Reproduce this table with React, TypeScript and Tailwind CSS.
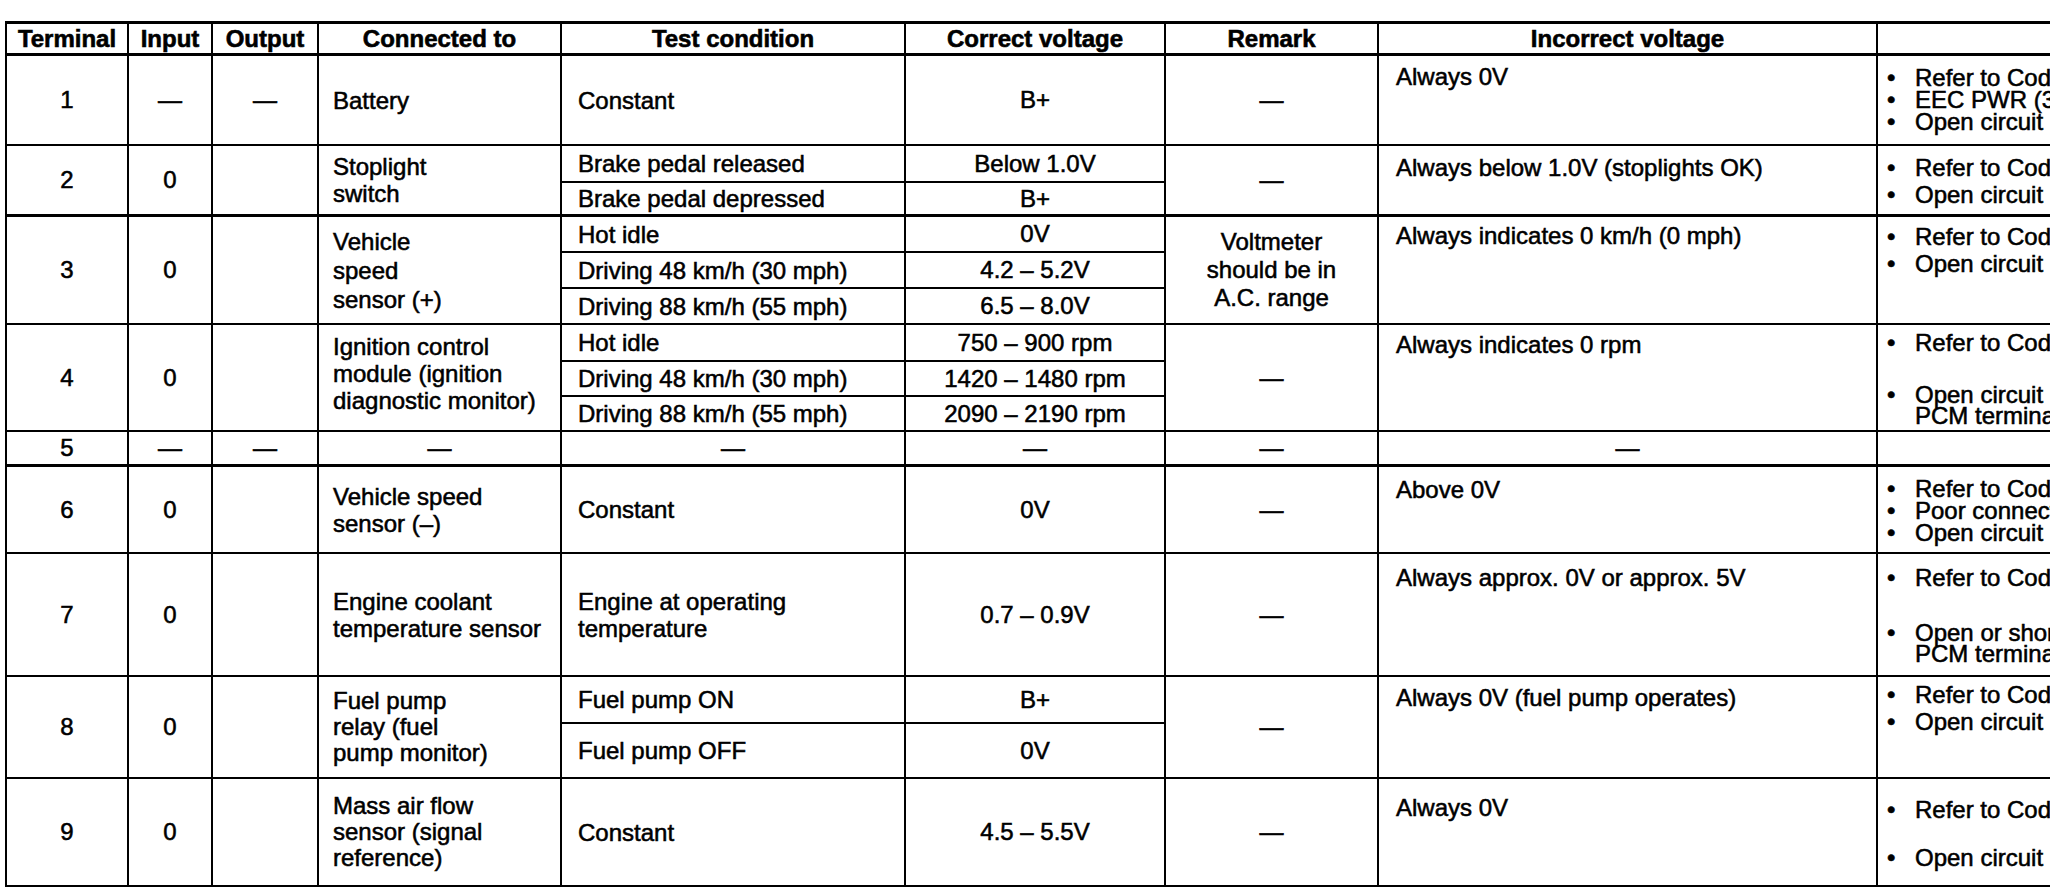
import React from "react";

type Line = { t?: string; bullet?: boolean; gap?: string };

function C({ className = "", children }: { className?: string; children?: React.ReactNode }) {
  return <div className={`border-r-2 border-black ${className}`}>{children}</div>;
}

const ctr = "flex items-center justify-center text-center";
const hdr = "flex items-center justify-center text-center font-bold [-webkit-text-stroke:0.6px_black]";
const lft = "flex items-center pl-[14px] leading-[27px] whitespace-nowrap";
const tst = "flex items-center pl-[16px] leading-[27px] whitespace-nowrap";
const b2 = "border-b-2";
const b3 = "border-b-[3px]";

function Lines({ lines, className }: { lines: Line[]; className: string }) {
  return (
    <div className={`pl-[9px] whitespace-nowrap ${className}`}>
      {lines.map((l, i) =>
        l.gap ? (
          <div key={i} className={l.gap} />
        ) : (
          <div key={i} className="flex">
            <span className="w-[28px] shrink-0">{l.bullet ? "•" : ""}</span>
            <span>{l.t}</span>
          </div>
        )
      )}
    </div>
  );
}

export default function App() {
  return (
    <div className="w-[2050px] h-[896px] overflow-hidden bg-white text-black font-['Liberation_Sans',Arial,sans-serif] text-[24px] [-webkit-text-stroke:0.55px_black]">
      <div className="mt-[21px] ml-[5px] w-[2275px] grid border-l-2 border-t-[3px] border-black grid-cols-[122px_84px_106px_243px_344px_260px_213px_499px_400px] grid-rows-[32px_90px_37px_34px_36px_36px_36px_37px_35px_35px_35px_87px_123px_47px_55px_108px]">
        {/* Header */}
        <C className={`${b3} ${hdr}`}>Terminal</C>
        <C className={`${b3} ${hdr}`}>Input</C>
        <C className={`${b3} ${hdr}`}>Output</C>
        <C className={`${b3} ${hdr}`}>Connected to</C>
        <C className={`${b3} ${hdr}`}>Test condition</C>
        <C className={`${b3} ${hdr}`}>Correct voltage</C>
        <C className={`${b3} ${hdr}`}>Remark</C>
        <C className={`${b3} ${hdr}`}>Incorrect voltage</C>
        <C className={`${b3}`}></C>

        {/* Row 1 */}
        <C className={`${b2} ${ctr}`}>1</C>
        <C className={`${b2} ${ctr}`}>—</C>
        <C className={`${b2} ${ctr}`}>—</C>
        <C className={`${b2} ${lft}`}>Battery</C>
        <C className={`${b2} ${tst}`}>Constant</C>
        <C className={`${b2} ${ctr}`}>B+</C>
        <C className={`${b2} ${ctr}`}>—</C>
        <C className={`${b2} pl-[17px] pt-[10px] leading-[22px]`}>Always 0V</C>
        <C className={`${b2}`}>
          <Lines
            className="pt-[11px] leading-[22px]"
            lines={[
              { bullet: true, t: "Refer to Code No.14 (PCM)" },
              { bullet: true, t: "EEC PWR (30A) fuse" },
              { bullet: true, t: "Open circuit" },
            ]}
          />
        </C>

        {/* Row 2 */}
        <C className={`${b3} ${ctr} row-span-2`}>2</C>
        <C className={`${b3} ${ctr} row-span-2`}>0</C>
        <C className={`${b3} row-span-2`}></C>
        <C className={`${b3} ${lft} row-span-2`}>
          <div>
            Stoplight
            <br />
            switch
          </div>
        </C>
        <C className={`${b2} ${tst}`}>Brake pedal released</C>
        <C className={`${b2} ${ctr}`}>Below 1.0V</C>
        <C className={`${b3} ${ctr} row-span-2`}>—</C>
        <C className={`${b3} row-span-2 pl-[17px] pt-[11px] leading-[22px]`}>Always below 1.0V (stoplights OK)</C>
        <C className={`${b3} row-span-2`}>
          <Lines
            className="pt-[8px] leading-[27px]"
            lines={[
              { bullet: true, t: "Refer to Code No.74" },
              { bullet: true, t: "Open circuit" },
            ]}
          />
        </C>
        <C className={`${b3} ${tst}`}>Brake pedal depressed</C>
        <C className={`${b3} ${ctr}`}>B+</C>

        {/* Row 3 */}
        <C className={`${b2} ${ctr} row-span-3`}>3</C>
        <C className={`${b2} ${ctr} row-span-3`}>0</C>
        <C className={`${b2} row-span-3`}></C>
        <C className={`${b2} ${lft} row-span-3`}>
          <div className="leading-[29px]">
            Vehicle
            <br />
            speed
            <br />
            sensor (+)
          </div>
        </C>
        <C className={`${b2} ${tst}`}>Hot idle</C>
        <C className={`${b2} ${ctr}`}>0V</C>
        <C className={`${b2} ${ctr} row-span-3 leading-[28px]`}>
          <div>
            Voltmeter
            <br />
            should be in
            <br />
            A.C. range
          </div>
        </C>
        <C className={`${b2} row-span-3 pl-[17px] pt-[8px] leading-[22px]`}>Always indicates 0 km/h (0 mph)</C>
        <C className={`${b2} row-span-3`}>
          <Lines
            className="pt-[6px] leading-[27px]"
            lines={[
              { bullet: true, t: "Refer to Code No.24" },
              { bullet: true, t: "Open circuit" },
            ]}
          />
        </C>
        <C className={`${b2} ${tst}`}>Driving 48 km/h (30 mph)</C>
        <C className={`${b2} ${ctr}`}>4.2 – 5.2V</C>
        <C className={`${b2} ${tst}`}>Driving 88 km/h (55 mph)</C>
        <C className={`${b2} ${ctr}`}>6.5 – 8.0V</C>

        {/* Row 4 */}
        <C className={`${b2} ${ctr} row-span-3`}>4</C>
        <C className={`${b2} ${ctr} row-span-3`}>0</C>
        <C className={`${b2} row-span-3`}></C>
        <C className={`${b2} ${lft} row-span-3`}>
          <div className="-mt-[8px]">
            Ignition control
            <br />
            module (ignition
            <br />
            diagnostic monitor)
          </div>
        </C>
        <C className={`${b2} ${tst}`}>Hot idle</C>
        <C className={`${b2} ${ctr}`}>750 – 900 rpm</C>
        <C className={`${b2} ${ctr} row-span-3`}>—</C>
        <C className={`${b2} row-span-3 pl-[17px] pt-[9px] leading-[22px]`}>Always indicates 0 rpm</C>
        <C className={`${b2} row-span-3`}>
          <Lines
            className="pt-[7px] leading-[21px]"
            lines={[
              { bullet: true, t: "Refer to Code No.02" },
              { gap: "h-[31px]" },
              { bullet: true, t: "Open circuit between" },
              { t: "PCM terminal 4 and" },
            ]}
          />
        </C>
        <C className={`${b2} ${tst}`}>Driving 48 km/h (30 mph)</C>
        <C className={`${b2} ${ctr}`}>1420 – 1480 rpm</C>
        <C className={`${b2} ${tst}`}>Driving 88 km/h (55 mph)</C>
        <C className={`${b2} ${ctr}`}>2090 – 2190 rpm</C>

        {/* Row 5 */}
        <C className={`${b3} ${ctr}`}>5</C>
        <C className={`${b3} ${ctr}`}>—</C>
        <C className={`${b3} ${ctr}`}>—</C>
        <C className={`${b3} ${ctr}`}>—</C>
        <C className={`${b3} ${ctr}`}>—</C>
        <C className={`${b3} ${ctr}`}>—</C>
        <C className={`${b3} ${ctr}`}>—</C>
        <C className={`${b3} ${ctr}`}>—</C>
        <C className={`${b3}`}></C>

        {/* Row 6 */}
        <C className={`${b2} ${ctr}`}>6</C>
        <C className={`${b2} ${ctr}`}>0</C>
        <C className={`${b2}`}></C>
        <C className={`${b2} ${lft}`}>
          <div>
            Vehicle speed
            <br />
            sensor (–)
          </div>
        </C>
        <C className={`${b2} ${tst}`}>Constant</C>
        <C className={`${b2} ${ctr}`}>0V</C>
        <C className={`${b2} ${ctr}`}>—</C>
        <C className={`${b2} pl-[17px] pt-[12px] leading-[22px]`}>Above 0V</C>
        <C className={`${b2}`}>
          <Lines
            className="pt-[11px] leading-[22px]"
            lines={[
              { bullet: true, t: "Refer to Code No.24" },
              { bullet: true, t: "Poor connection" },
              { bullet: true, t: "Open circuit" },
            ]}
          />
        </C>

        {/* Row 7 */}
        <C className={`${b2} ${ctr}`}>7</C>
        <C className={`${b2} ${ctr}`}>0</C>
        <C className={`${b2}`}></C>
        <C className={`${b2} ${lft}`}>
          <div>
            Engine coolant
            <br />
            temperature sensor
          </div>
        </C>
        <C className={`${b2} ${tst}`}>
          <div>
            Engine at operating
            <br />
            temperature
          </div>
        </C>
        <C className={`${b2} ${ctr}`}>0.7 – 0.9V</C>
        <C className={`${b2} ${ctr}`}>—</C>
        <C className={`${b2} pl-[17px] pt-[13px] leading-[22px]`}>Always approx. 0V or approx. 5V</C>
        <C className={`${b2}`}>
          <Lines
            className="pt-[13px] leading-[21px]"
            lines={[
              { bullet: true, t: "Refer to Code No.09" },
              { gap: "h-[34px]" },
              { bullet: true, t: "Open or short circuit" },
              { t: "PCM terminal 7 and" },
            ]}
          />
        </C>

        {/* Row 8 */}
        <C className={`${b2} ${ctr} row-span-2`}>8</C>
        <C className={`${b2} ${ctr} row-span-2`}>0</C>
        <C className={`${b2} row-span-2`}></C>
        <C className={`${b2} ${lft} row-span-2`}>
          <div className="leading-[26px]">
            Fuel pump
            <br />
            relay (fuel
            <br />
            pump monitor)
          </div>
        </C>
        <C className={`${b2} ${tst}`}>Fuel pump ON</C>
        <C className={`${b2} ${ctr}`}>B+</C>
        <C className={`${b2} ${ctr} row-span-2`}>—</C>
        <C className={`${b2} row-span-2 pl-[17px] pt-[10px] leading-[22px]`}>Always 0V (fuel pump operates)</C>
        <C className={`${b2} row-span-2`}>
          <Lines
            className="pt-[4px] leading-[27px]"
            lines={[
              { bullet: true, t: "Refer to Code No.41" },
              { bullet: true, t: "Open circuit" },
            ]}
          />
        </C>
        <C className={`${b2} ${tst}`}>Fuel pump OFF</C>
        <C className={`${b2} ${ctr}`}>0V</C>

        {/* Row 9 */}
        <C className={`${b2} ${ctr}`}>9</C>
        <C className={`${b2} ${ctr}`}>0</C>
        <C className={`${b2}`}></C>
        <C className={`${b2} ${lft}`}>
          <div className="leading-[26px]">
            Mass air flow
            <br />
            sensor (signal
            <br />
            reference)
          </div>
        </C>
        <C className={`${b2} ${tst}`}>Constant</C>
        <C className={`${b2} ${ctr}`}>4.5 – 5.5V</C>
        <C className={`${b2} ${ctr}`}>—</C>
        <C className={`${b2} pl-[17px] pt-[18px] leading-[22px]`}>Always 0V</C>
        <C className={`${b2}`}>
          <Lines
            className="pt-[20px] leading-[22px]"
            lines={[
              { bullet: true, t: "Refer to Code No.12" },
              { gap: "h-[26px]" },
              { bullet: true, t: "Open circuit" },
            ]}
          />
        </C>
      </div>
    </div>
  );
}
